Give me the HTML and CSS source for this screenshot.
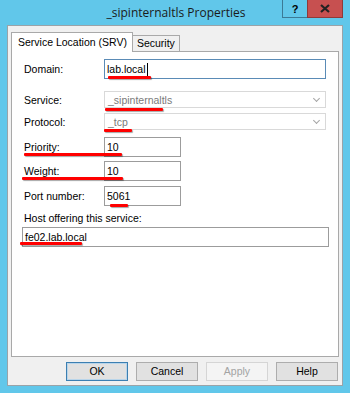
FILE: index.html
```html
<!DOCTYPE html>
<html lang="en">

<head>
  <meta charset="UTF-8">
  <meta name="viewport" content="width=device-width, initial-scale=1.0">
  <title>_sipinternaltls Properties</title>
  <link rel="stylesheet" href="styles.css">
</head>

<body>
  <div id="window">
    <div id="titlebar">
      <div class="title">_sipinternaltls Properties</div>
      <div class="caption-btns">
        <div class="cap help">?</div>
        <div class="cap close">
          <svg width="10" height="9" viewBox="0 0 10 9">
            <path d="M1 1 L9 8 M9 1 L1 8" stroke="#222" stroke-width="2.2" />
          </svg>
        </div>
      </div>
    </div>

    <div id="dialog">
      <ul id="tabs">
        <li class="active">Service Location (SRV)</li>
        <li>Security</li>
      </ul>
      <div id="panel">
        <div class="row domain">
          <label>Domain:</label>
          <div class="field focus">lab.local<span class="caret"></span></div>
        </div>
        <div class="row service">
          <label>Service:</label>
          <div class="select">_sipinternaltls<span class="chev"></span></div>
        </div>
        <div class="row protocol">
          <label>Protocol:</label>
          <div class="select">_tcp<span class="chev"></span></div>
        </div>
        <div class="row num first">
          <label>Priority:</label>
          <div class="field short">10</div>
        </div>
        <div class="row num">
          <label>Weight:</label>
          <div class="field short">10</div>
        </div>
        <div class="row num port">
          <label>Port number:</label>
          <div class="field short">5061</div>
        </div>
        <div class="host-label">Host offering this service:</div>
        <div class="field host">fe02.lab.local</div>
      </div>
      <div id="buttons">
        <div class="btn default">OK</div>
        <div class="btn">Cancel</div>
        <div class="btn disabled">Apply</div>
        <div class="btn">Help</div>
      </div>
    </div>

    <!-- red marks drawn over the screenshot -->
    <div class="mark" style="left:108px;top:76px;width:43px"></div>
    <div class="mark" style="left:105px;top:108px;width:58px"></div>
    <div class="mark" style="left:104px;top:129px;width:28px"></div>
    <div class="mark" style="left:24px;top:153px;width:98px"></div>
    <div class="mark" style="left:22px;top:177px;width:101px"></div>
    <div class="mark" style="left:110px;top:204px;width:18px"></div>
    <div class="mark" style="left:20px;top:242px;width:62px"></div>
  </div>
</body>

</html>
```

FILE: styles.css
```css
* {
  margin: 0;
  padding: 0;
  box-sizing: border-box;
}

li {
  list-style: none;
}

body {
  background: #61c7ea;
  font-family: "Liberation Sans", Arial, sans-serif;
  font-size: 10.5px;
  color: #000;
}

#window {
  width: 350px;
  height: 393px;
  position: relative;
  background: #61c7ea;
  padding: 0 7px 7px 7px;
  display: flex;
  flex-direction: column;
}

#titlebar {
  height: 25px;
  position: relative;
  display: flex;
  justify-content: center;
  align-items: center;
}

#titlebar .title {
  font-family: "Open Sans", "Liberation Sans", sans-serif;
  font-size: 12px;
  color: #1a1a1a;
  margin-left: 2px;
}

.caption-btns {
  position: absolute;
  top: 0;
  right: 0;
  display: flex;
}

.cap {
  height: 18px;
  display: flex;
  align-items: center;
  justify-content: center;
  border: 1px solid #3c7a96;
  border-top: none;
}

.help {
  width: 25px;
  background: #61c7ea;
  font-weight: bold;
  font-size: 11px;
  border-right: none;
}

.close {
  width: 36px;
  background: #c75050;
  border-color: #8f3a3a;
}

#dialog {
  flex: 1;
  background: #f0f0f0;
  border: 1px solid #9aa3a8;
  padding: 6px 3px 0 3px;
  display: flex;
  flex-direction: column;
}

#tabs {
  display: flex;
  align-items: flex-end;
  height: 19px;
  position: relative;
  z-index: 1;
}

#tabs li {
  height: 16px;
  padding: 0 4px;
  border: 1px solid #a9a9a9;
  border-bottom: none;
  background: #f0f0f0;
  line-height: 15px;
  margin-left: -1px;
}

#tabs li.active {
  height: 20px;
  background: #fff;
  padding: 0 5px 0 6px;
  line-height: 18px;
  margin-left: 0;
  margin-bottom: -1px;
}

#panel {
  height: 306px;
  background: #fff;
  border: 1px solid #a9a9a9;
  padding: 7px 10px 0 10px;
}

.row {
  display: flex;
  align-items: center;
}

.row label {
  width: 82px;
  padding-left: 2px;
}

.field {
  height: 20px;
  border: 1px solid #a7a7a7;
  background: #fff;
  padding: 0 2px;
  line-height: 18px;
  display: flex;
  align-items: center;
}

.field.focus {
  width: 222px;
  border-color: #5a8bb6;
}

.caret {
  display: inline-block;
  width: 1px;
  height: 13px;
  background: #000;
  margin-left: 1px;
}

.row.service {
  margin-top: 12px;
}

.row.protocol {
  margin-top: 5px;
}

.select {
  width: 222px;
  height: 17px;
  border: 1px solid #d9d9d9;
  color: #7a7a7a;
  padding: 0 3px;
  display: flex;
  align-items: center;
  justify-content: space-between;
}

.chev {
  width: 5px;
  height: 5px;
  border-right: 1px solid #a6a6a6;
  border-bottom: 1px solid #a6a6a6;
  transform: rotate(45deg);
  margin: -3px 3px 0 0;
}

.row.num {
  margin-top: 4px;
}

.row.num.first {
  margin-top: 7px;
}

.row.num.port {
  margin-top: 5px;
}

.field.short {
  width: 77px;
  border-color: #9c9c9c;
}

.host-label {
  margin-top: 5px;
  padding-left: 2px;
  height: 15px;
  line-height: 15px;
}

.field.host {
  margin-top: 1px;
  width: 307px;
  border-color: #9c9c9c;
}

#buttons {
  display: flex;
  justify-content: flex-end;
  gap: 8px;
  padding: 5px 1px 0 0;
}

.btn {
  width: 62px;
  height: 19px;
  background: #e1e1e1;
  border: 1px solid #adadad;
  text-align: center;
  line-height: 17px;
}

.btn.default {
  border-color: #3c7fb1;
  box-shadow: inset 0 0 0 1px #b9d5ea;
}

.btn.disabled {
  background: #f4f4f4;
  border-color: #d5d5d5;
  color: #a3a3a3;
}

.mark {
  position: absolute;
  height: 3px;
  background: #f00;
  border-radius: 1px;
  box-shadow: 1px 1px 1px rgba(0, 0, 0, 0.35);
}
```
